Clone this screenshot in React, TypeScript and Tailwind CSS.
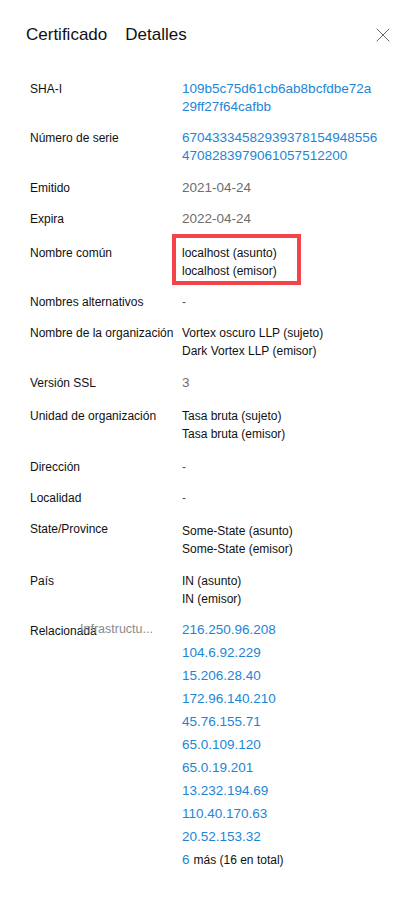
import { X } from 'lucide-react';

type Row = {
  label: string;
  mt: string;
  kind: 'link' | 'muted' | 'text' | 'dash';
  values: string[];
  boxed?: boolean;
  valueOffset?: string;
};

const rows: Row[] = [
  { label: 'SHA-I', mt: 'mt-0', kind: 'link', values: ['109b5c75d61cb6ab8bcfdbe72a', '29ff27f64cafbb'] },
  { label: 'Número de serie', mt: 'mt-[13px]', kind: 'link', values: ['67043334582939378154948556', '4708283979061057512200'] },
  { label: 'Emitido', mt: 'mt-[14px]', kind: 'muted', values: ['2021-04-24'] },
  { label: 'Expira', mt: 'mt-[13px]', kind: 'muted', values: ['2022-04-24'] },
  { label: 'Nombre común', mt: 'mt-[16px]', kind: 'text', values: ['localhost (asunto)', 'localhost (emisor)'], boxed: true },
  { label: 'Nombres alternativos', mt: 'mt-[13px]', kind: 'dash', values: ['-'] },
  { label: 'Nombre de la organización', mt: 'mt-[13px]', kind: 'text', values: ['Vortex oscuro LLP (sujeto)', 'Dark Vortex LLP (emisor)'] },
  { label: 'Versión SSL', mt: 'mt-[14px]', kind: 'muted', values: ['3'] },
  { label: 'Unidad de organización', mt: 'mt-[15px]', kind: 'text', values: ['Tasa bruta (sujeto)', 'Tasa bruta (emisor)'] },
  { label: 'Dirección', mt: 'mt-[15px]', kind: 'dash', values: ['-'] },
  { label: 'Localidad', mt: 'mt-[13px]', kind: 'dash', values: ['-'] },
  { label: 'State/Province', mt: 'mt-[13px]', kind: 'text', values: ['Some-State (asunto)', 'Some-State (emisor)'], valueOffset: 'pt-[2px]' },
  { label: 'País', mt: 'mt-[14px]', kind: 'text', values: ['IN (asunto)', 'IN (emisor)'] },
];

const ips = [
  '216.250.96.208',
  '104.6.92.229',
  '15.206.28.40',
  '172.96.140.210',
  '45.76.155.71',
  '65.0.109.120',
  '65.0.19.201',
  '13.232.194.69',
  '110.40.170.63',
  '20.52.153.32',
];

const valueClass = {
  link: 'text-[13.5px] text-[#1c86d6]',
  muted: 'text-[13.5px] text-[#6d6d6d]',
  text: 'text-[12px] text-[#111]',
  dash: 'text-[12px] text-[#555]',
};

export default function App() {
  return (
    <div className="w-[413px] min-h-[905px] bg-white font-['Liberation_Sans',Arial,sans-serif] text-[#111]">
      {/* Header */}
      <div className="flex items-center justify-between pl-[26px] pr-[18px] pt-[23px]">
        <div className="flex gap-[18px] text-[17px] leading-[24px] text-[#111]">
          <span>Certificado</span>
          <span>Detalles</span>
        </div>
        <X className="h-[24px] w-[24px] text-[#6a6a6a]" strokeWidth={1} />
      </div>

      {/* Details */}
      <div className="mt-[33px] flex flex-col px-[30px]">
        {rows.map((row) => (
          <div key={row.label} className={`flex ${row.mt}`}>
            <div className="w-[152px] shrink-0 text-[12px] leading-[18px]">{row.label}</div>
            <div className={`relative flex flex-col leading-[18px] ${valueClass[row.kind]} ${row.valueOffset ?? ''}`}>
              {row.values.map((v) => (
                <span key={v}>{v}</span>
              ))}
              {row.boxed && (
                <div className="absolute left-[-10px] top-[-10px] h-[51px] w-[129px] border-[4px] border-[#f44449]" />
              )}
            </div>
          </div>
        ))}

        {/* Related infrastructure */}
        <div className="relative mt-[13px] flex">
          <div className="w-[152px] shrink-0 text-[12px] leading-[18px] pt-[1px]">Relacionada</div>
          <span className="absolute left-[50px] top-[-1px] text-[12.5px] leading-[18px] text-[#8a8a8a]">Infrastructu...</span>
          <div className="flex flex-col gap-[5px] text-[13.5px] leading-[18px] text-[#1c86d6]">
            {ips.map((ip) => (
              <span key={ip}>{ip}</span>
            ))}
            <span className="flex items-baseline gap-[4px]">
              <span>6</span>
              <span className="text-[12px] text-[#111]">más (16 en total)</span>
            </span>
          </div>
        </div>
      </div>
    </div>
  );
}
